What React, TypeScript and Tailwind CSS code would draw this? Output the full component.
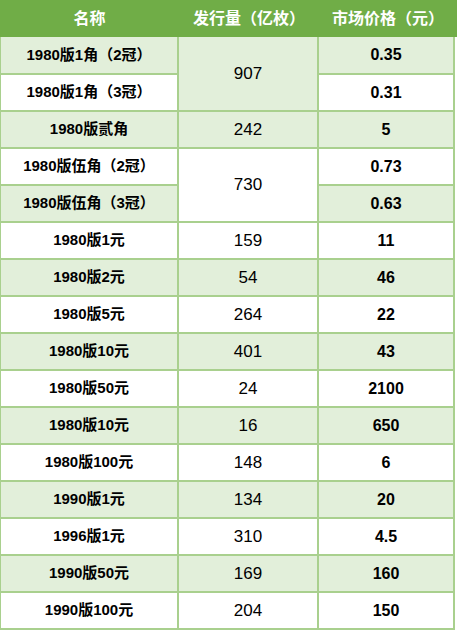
import React from 'react'

type Row = {
  name: string
  qty?: string
  span?: number
  price: string
}

const rows: Row[] = [
  { name: '1980版1角（2冠）', qty: '907', span: 2, price: '0.35' },
  { name: '1980版1角（3冠）', price: '0.31' },
  { name: '1980版贰角', qty: '242', price: '5' },
  { name: '1980版伍角（2冠）', qty: '730', span: 2, price: '0.73' },
  { name: '1980版伍角（3冠）', price: '0.63' },
  { name: '1980版1元', qty: '159', price: '11' },
  { name: '1980版2元', qty: '54', price: '46' },
  { name: '1980版5元', qty: '264', price: '22' },
  { name: '1980版10元', qty: '401', price: '43' },
  { name: '1980版50元', qty: '24', price: '2100' },
  { name: '1980版10元', qty: '16', price: '650' },
  { name: '1980版100元', qty: '148', price: '6' },
  { name: '1990版1元', qty: '134', price: '20' },
  { name: '1996版1元', qty: '310', price: '4.5' },
  { name: '1990版50元', qty: '169', price: '160' },
  { name: '1990版100元', qty: '204', price: '150' },
]

const App = () => {
  return (
    <div className="w-[457px] bg-white font-['Liberation_Sans','Noto_Sans_CJK_SC',sans-serif] text-black">
      {/* header */}
      <div className="flex h-[37px] bg-[#70AD47] text-[16px] font-bold text-white">
        <div className="flex w-[179px] items-center justify-center">名称</div>
        <div className="flex w-[140px] items-center justify-center">发行量（亿枚）</div>
        <div className="flex w-[138px] items-center justify-center">市场价格（元）</div>
      </div>

      <table className="w-[455px] table-fixed border-separate border-spacing-0">
        <colgroup>
          <col className="w-[179px]" />
          <col className="w-[140px]" />
          <col className="w-[136px]" />
        </colgroup>
        <tbody>
          {rows.map((r, i) => {
            const bg = i % 2 === 0 ? 'bg-[#E2EFDA]' : 'bg-white'
            const h = i === 0 ? 'h-[38px]' : 'h-[37px]'
            return (
              <tr key={i}>
                <td className={`${h} ${bg} border-b-2 border-l border-r-2 border-[#A9D08E] p-0 text-center text-[15px] font-bold`}>
                  {r.name}
                </td>
                {r.qty && (
                  <td
                    rowSpan={r.span}
                    className={`${bg} border-b-2 border-r-2 border-[#A9D08E] p-0 text-center text-[17px]`}
                  >
                    {r.qty}
                  </td>
                )}
                <td className={`${bg} border-b-2 border-r-2 border-[#A9D08E] p-0 text-center text-[16px] font-bold`}>
                  {r.price}
                </td>
              </tr>
            )
          })}
        </tbody>
      </table>
    </div>
  )
}

export default App
